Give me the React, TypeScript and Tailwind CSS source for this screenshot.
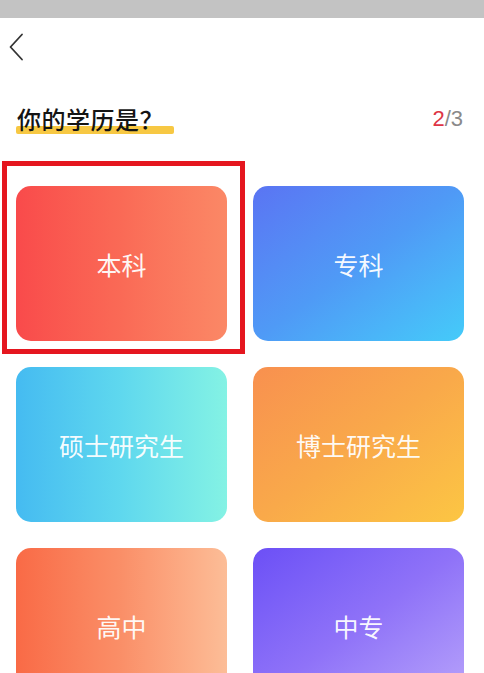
import React from 'react';

interface Option {
  readonly label: string;
  readonly gradient: string;
}

const OPTIONS: readonly Option[] = [
  { label: '本科', gradient: 'bg-gradient-to-r from-[#f94a4b] via-[#fa6a56] to-[#fb8866]' },
  { label: '专科', gradient: 'bg-gradient-to-br from-[#5a74f3] via-[#4f9af6] to-[#44cbf9]' },
  { label: '硕士研究生', gradient: 'bg-gradient-to-r from-[#45bbf1] via-[#5fd8ee] to-[#84f2e4]' },
  { label: '博士研究生', gradient: 'bg-gradient-to-br from-[#f8904f] via-[#f9a94a] to-[#fcc643]' },
  { label: '高中', gradient: 'bg-gradient-to-r from-[#f96a46] via-[#fa8f68] to-[#fcbd97]' },
  { label: '中专', gradient: 'bg-gradient-to-br from-[#6c4ff6] via-[#8f72f8] to-[#b9a3fa]' },
];

function BackIcon(): React.ReactElement {
  return (
    <svg width="16" height="28" viewBox="0 0 16 28" fill="none">
      <path d="M14 1.5 L2.5 14 L14 26.5" stroke="#333" strokeWidth="1.8" strokeLinecap="round" strokeLinejoin="round" />
    </svg>
  );
}

function OptionCard({ option, selected }: { option: Option; selected: boolean }): React.ReactElement {
  return (
    <div className="relative">
      <button
        type="button"
        className={`flex h-[155px] w-[211px] items-center justify-center rounded-[15px] ${option.gradient} pt-[3px] text-[25px] text-white/95`}
      >
        {option.label}
      </button>
      {selected ? (
        <div className="pointer-events-none absolute -left-[14px] -top-[25px] h-[193px] w-[243px] border-[5px] border-[#e5161f]" />
      ) : null}
    </div>
  );
}

export default function App(): React.ReactElement {
  return (
    <div
      className="h-[673px] w-[484px] overflow-hidden bg-white"
      style={{ fontFamily: '"Noto Sans CJK SC", "Noto Sans", sans-serif' }}
    >
      <div className="h-[18px] bg-[#c3c3c3]" />
      <div className="flex h-[45px] items-center pl-[8px] pt-[12px]">
        <BackIcon />
      </div>
      <div className="flex items-end justify-between pl-[17px] pr-[21px] pt-[40px]">
        <div className="relative">
          <div className="absolute -left-[1px] bottom-[1px] h-[8px] w-[158px] rounded-[2px] bg-[#f7c843]" />
          <h1 className="relative text-[24px] font-medium leading-[32px] tracking-[0.5px] text-[#141414]">
            你的学历是？
          </h1>
        </div>
        <div className="pb-[4px] text-[22px] leading-[24px]" style={{ fontFamily: '"Liberation Sans", Arial, sans-serif' }}>
          <span className="text-[#de3545]">2</span>
          <span className="text-[#8a8a8a]">/3</span>
        </div>
      </div>
      <div className="mt-[51px] grid grid-cols-[211px_211px] gap-[26px] pl-[16px]">
        {OPTIONS.map((option, i) => (
          <OptionCard key={option.label} option={option} selected={i === 0} />
        ))}
      </div>
    </div>
  );
}
